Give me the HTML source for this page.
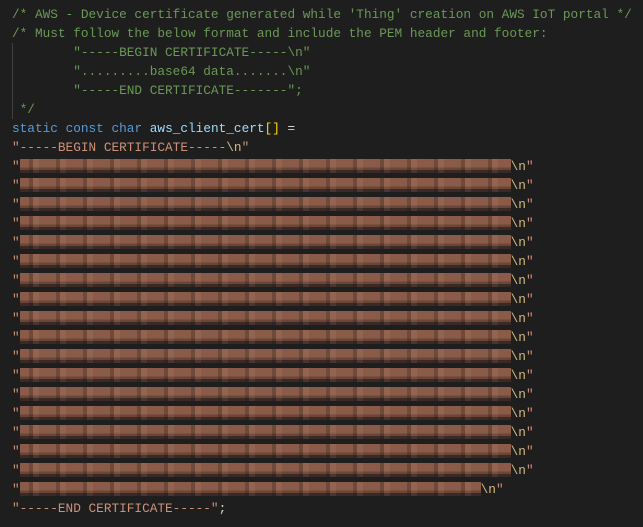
<!DOCTYPE html>
<html><head><style>
body{margin:0;background:#1e1e1e;width:643px;height:527px;overflow:hidden;position:relative}
.code{position:absolute;left:12px;top:5px;font-family:"Liberation Mono",monospace;font-size:12.75px;line-height:19px;white-space:pre;color:#d4d4d4}
.c{color:#6a9955}.k{color:#569cd6}.v{color:#9cdcfe}.b{color:#ffd700}.s{color:#ce9178}.e{color:#d7ba7d}
.g{position:absolute;left:12px;top:43px;width:1px;height:76px;background:#404040}
.bl{display:inline-block;width:491px;height:14px;vertical-align:-3px;background:
repeating-linear-gradient(90deg,rgba(0,0,0,0) 0 9px,rgba(30,20,18,.25) 9px 13px,rgba(255,200,170,.08) 13px 19px,rgba(0,0,0,0) 19px 27px),
linear-gradient(180deg,#8a5b48 0 60%,#6a4538 60% 80%,#3a2a26 80% 100%)}
.sh{width:461px}
</style></head><body>
<div class="g"></div>
<div class="code"><span class="c">/* AWS - Device certificate generated while 'Thing' creation on AWS IoT portal */</span>
<span class="c">/* Must follow the below format and include the PEM header and footer:</span>
<span class="c">        "-----BEGIN CERTIFICATE-----\n"</span>
<span class="c">        ".........base64 data.......\n"</span>
<span class="c">        "-----END CERTIFICATE-------";</span>
<span class="c"> */</span>
<span class="k">static</span> <span class="k">const</span> <span class="k">char</span> <span class="v">aws_client_cert</span><span class="b">[]</span> =
<span class="s">"-----BEGIN CERTIFICATE-----</span><span class="e">\n</span><span class="s">"</span>
<span class="s">"</span><span class="bl"></span><span class="e">\n</span><span class="s">"</span>
<span class="s">"</span><span class="bl"></span><span class="e">\n</span><span class="s">"</span>
<span class="s">"</span><span class="bl"></span><span class="e">\n</span><span class="s">"</span>
<span class="s">"</span><span class="bl"></span><span class="e">\n</span><span class="s">"</span>
<span class="s">"</span><span class="bl"></span><span class="e">\n</span><span class="s">"</span>
<span class="s">"</span><span class="bl"></span><span class="e">\n</span><span class="s">"</span>
<span class="s">"</span><span class="bl"></span><span class="e">\n</span><span class="s">"</span>
<span class="s">"</span><span class="bl"></span><span class="e">\n</span><span class="s">"</span>
<span class="s">"</span><span class="bl"></span><span class="e">\n</span><span class="s">"</span>
<span class="s">"</span><span class="bl"></span><span class="e">\n</span><span class="s">"</span>
<span class="s">"</span><span class="bl"></span><span class="e">\n</span><span class="s">"</span>
<span class="s">"</span><span class="bl"></span><span class="e">\n</span><span class="s">"</span>
<span class="s">"</span><span class="bl"></span><span class="e">\n</span><span class="s">"</span>
<span class="s">"</span><span class="bl"></span><span class="e">\n</span><span class="s">"</span>
<span class="s">"</span><span class="bl"></span><span class="e">\n</span><span class="s">"</span>
<span class="s">"</span><span class="bl"></span><span class="e">\n</span><span class="s">"</span>
<span class="s">"</span><span class="bl"></span><span class="e">\n</span><span class="s">"</span>
<span class="s">"</span><span class="bl sh"></span><span class="e">\n</span><span class="s">"</span>
<span class="s">"-----END CERTIFICATE-----"</span>;</div>
</body></html>
